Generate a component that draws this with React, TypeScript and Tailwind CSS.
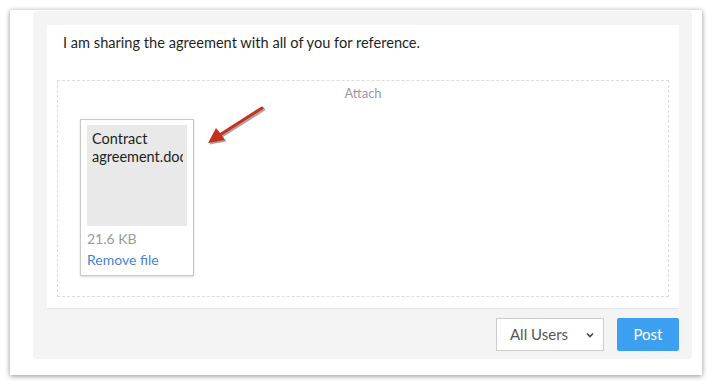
export default function App() {
  return (
    <div className="h-[385px] w-[712px] bg-white pl-[10px] pt-[10px] font-['Lato','Open_Sans',sans-serif]">
      <div className="flex h-[365px] w-[692px] flex-col bg-white pl-[23px] pr-[10px] pt-[1px] shadow-[0_1px_5px_rgba(0,0,0,0.45)]">
        <div className="flex h-[348px] flex-col rounded-[4px] bg-[#f4f4f4] pb-[8px] pl-[14px] pr-[13px] pt-[14px]">
          <div className="flex h-[284px] flex-col border-b border-[#e6e6e6] bg-white px-[10px] pb-[11px]">
            <p className="pl-[6px] pt-[8px] text-[14.6px] leading-[20px] text-[#1f1f1f]">
              I am sharing the agreement with all of you for reference.
            </p>
            <div className="relative mt-[27px] flex-1 border border-dashed border-[#dcdcdc]">
              <div className="pt-[4px] text-center text-[13px] leading-[16px] text-[#9a9a9a]">Attach</div>
              <div className="ml-[22px] mt-[18px] h-[157px] w-[114px] border border-[#c8c8c8] bg-white px-[6px] pt-[5px] shadow-[0_1px_2px_rgba(0,0,0,0.15)]">
                <div className="h-[101px] w-[100px] bg-[#e9e9e9] pl-[5px] pr-[4px] pt-[5px] text-[14.5px] leading-[18px] text-[#1f1f1f]">
                  <div className="overflow-hidden">
                    <div>Contract</div>
                    <div className="whitespace-nowrap">agreement.docx</div>
                  </div>
                </div>
                <div className="mt-[3px] text-[14px] leading-[20px] text-[#9a9a9a]">21.6 KB</div>
                <div className="mt-[1px] text-[14px] leading-[20px] text-[#4a7fd6]">Remove file</div>
              </div>
              <svg className="absolute left-[148px] top-[24px]" width="62" height="42" viewBox="0 0 62 42">
                <g transform="translate(1.5,1.5)" opacity="0.35">
                  <line x1="56" y1="3" x2="12" y2="31" stroke="#000" strokeWidth="3.2" strokeLinecap="round" />
                  <polygon points="2,38 10,23 19,35" fill="#000" />
                </g>
                <line x1="56" y1="3" x2="12" y2="31" stroke="#c4321f" strokeWidth="3" strokeLinecap="round" />
                <polygon points="2,38 10,23 19,35" fill="#c4321f" />
              </svg>
            </div>
          </div>
          <div className="mt-[9px] flex justify-end gap-[13px]">
            <div className="flex h-[33px] w-[108px] items-center justify-between border border-[#cccccc] bg-white pl-[13px] pr-[8px] text-[15px] text-[#555]">
              <span>All Users</span>
              <svg width="10" height="10" viewBox="0 0 10 10">
                <path d="M2 3.5 L5 6.5 L8 3.5" fill="none" stroke="#444" strokeWidth="1.6" />
              </svg>
            </div>
            <button className="h-[33px] w-[62px] rounded-[2px] bg-[#3d9ff0] text-[15px] text-white">Post</button>
          </div>
        </div>
      </div>
    </div>
  );
}
